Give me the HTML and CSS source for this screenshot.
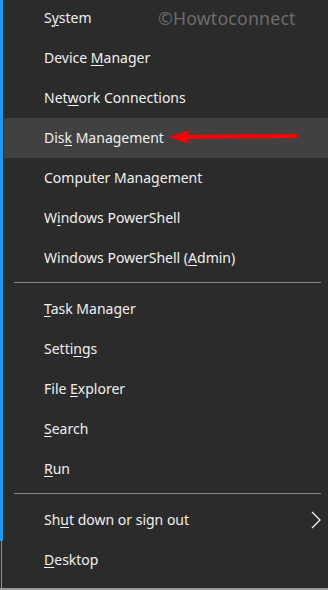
FILE: index.html
```html
<!DOCTYPE html>
<html lang="en">
<head>
    <meta charset="UTF-8">
    <meta name="viewport" content="width=device-width, initial-scale=1.0">
    <title>Quick Link Menu</title>
    <link rel="stylesheet" href="styles.css">
</head>
<body>
    <div class="menu">
        <div class="group first">
            <div class="item"><span>S<u>y</u>stem</span></div>
            <div class="item"><span>Device <u>M</u>anager</span></div>
            <div class="item"><span>Net<u>w</u>ork Connections</span></div>
            <div class="item active"><span>Dis<u>k</u> Management</span></div>
            <div class="item"><span>Computer Mana<u>g</u>ement</span></div>
            <div class="item"><span>W<u>i</u>ndows PowerShell</span></div>
            <div class="item"><span>Windows PowerShell (<u>A</u>dmin)</span></div>
        </div>
        <div class="sep"></div>
        <div class="group">
            <div class="item"><span><u>T</u>ask Manager</span></div>
            <div class="item"><span>Setti<u>n</u>gs</span></div>
            <div class="item"><span>File <u>E</u>xplorer</span></div>
            <div class="item"><span><u>S</u>earch</span></div>
            <div class="item"><span><u>R</u>un</span></div>
        </div>
        <div class="sep"></div>
        <div class="group">
            <div class="item"><span>Sh<u>u</u>t down or sign out</span>
                <svg class="chevron" width="10" height="18" viewBox="0 0 10 18">
                    <polyline points="1,1 9,9 1,17" fill="none" stroke="#f2f2f2" stroke-width="1.3"/>
                </svg>
            </div>
            <div class="item"><span><u>D</u>esktop</span></div>
        </div>

        <!-- overlays from the screenshot -->
        <div class="watermark">&copy;Howtoconnect</div>
        <svg class="arrow" width="130" height="16" viewBox="0 0 130 16">
            <polygon points="0,8 21,1 17,7 17,9 21,15" fill="#f00"/>
            <line x1="17" y1="8" x2="127" y2="7" stroke="#f00" stroke-width="4" stroke-linecap="round"/>
        </svg>
    </div>
</body>
</html>
```

FILE: styles.css
```css
body { margin: 0; background: #2b2b2b; font-family: "Noto Sans", "Open Sans", sans-serif; }
.menu { position: relative; width: 328px; height: 590px; box-sizing: border-box; padding-left: 3px; border-bottom: 2px solid #9a9a9a; overflow: hidden;
    background: linear-gradient(#1d9bf0, #1d9bf0) 0 0 / 3px 541px no-repeat, linear-gradient(#8c8c8c, #8c8c8c) 1px 541px / 1px 100% no-repeat, #2b2b2b; }
.group { display: flex; flex-direction: column; }
.first { margin-top: -2px; }
.item { position: relative; height: 40px; display: flex; align-items: center; padding-left: 41px; color: #f0f0f0; font-size: 14px; }
.item span { position: relative; top: -1px; }
.item u { text-decoration-thickness: 1px; text-underline-offset: 2px; }
.active { background: #414141; margin-left: 1px; padding-left: 40px; }
.sep { height: 1px; background: #8a8a8a; margin: 4px 7px 6px 11px; }
.chevron { position: absolute; right: 7px; top: 11px; }
.watermark { position: absolute; left: 158px; top: 6px; color: #6c6c6c; font-size: 17.7px; letter-spacing: 0.2px; }
.arrow { position: absolute; left: 169px; top: 129px; }
```
